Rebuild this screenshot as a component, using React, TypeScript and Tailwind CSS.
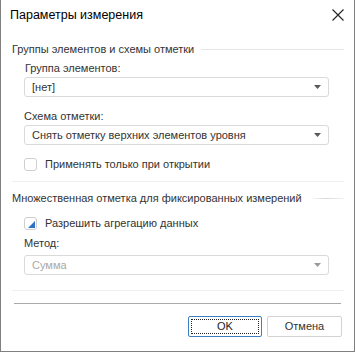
import React from "react";

function Combo({ value, disabled }: { value: string; disabled?: boolean }) {
  return (
    <div className="flex items-center justify-between h-[20px] ml-[12px] mr-[15px] pl-[7px] pr-[7px] border border-[#dadada] rounded-[3px] bg-white">
      <span className={disabled ? "text-[#a8a8a8]" : "text-[#333333]"}>{value}</span>
      <svg width="7" height="4" viewBox="0 0 7 4" className="shrink-0">
        <path d="M0 0H7L3.5 4Z" fill={disabled ? "#9a9a9a" : "#5a5a5a"} />
      </svg>
    </div>
  );
}

function SectionHeader({ title, lineClass }: { title: string; lineClass: string }) {
  return (
    <div className="flex items-center h-[18px]">
      <span className="text-[#333333] whitespace-nowrap">{title}</span>
      <div className={`flex-1 h-px ml-[7px] ${lineClass}`} />
    </div>
  );
}

export default function App() {
  return (
    <div
      className="w-[355px] h-[352px] bg-white border-x border-b border-[#7f7f7f] flex flex-col text-[11px] leading-none"
      style={{ fontFamily: '"Liberation Sans", Arial, sans-serif' }}
    >
      {/* title bar */}
      <div className="flex items-center justify-between h-[30px] pl-[9px] pr-[10px]">
        <span className="text-[12.5px] text-black">Параметры измерения</span>
        <svg width="12" height="12" viewBox="0 0 12 12">
          <path d="M0.5 0.5L11.5 11.5M11.5 0.5L0.5 11.5" stroke="#222" strokeWidth="1.1" />
        </svg>
      </div>

      <div className="flex flex-col pl-[11px] pr-[10px]">
        <div className="mt-[10px]">
          <SectionHeader title="Группы элементов и схемы отметки" lineClass="bg-[#e6e6e6]" />
        </div>

        <div className="flex items-center h-[18px] ml-[13px] mt-px text-[#333333]">Группа элементов:</div>
        <Combo value="[нет]" />

        <div className="flex items-center h-[18px] ml-[12px] mt-[10px] text-[#333333]">Схема отметки:</div>
        <Combo value="Снять отметку верхних элементов уровня" />

        <div className="flex items-center h-[14px] ml-[12px] mt-[12px] gap-[8px]">
          <div className="w-[13px] h-[13px] border border-[#cfcfcf] rounded-[3px] bg-white" />
          <span className="text-[#333333]">Применять только при открытии</span>
        </div>

        <div className="h-px mt-[10px] bg-[#efefef]" />

        <div className="mt-[7px]">
          <SectionHeader
            title="Множественная отметка для фиксированных измерений"
            lineClass="bg-gradient-to-r from-[#ffffff] via-[#d8d8d8] to-[#f2f2f2]"
          />
        </div>

        <div className="flex items-center h-[14px] ml-[12px] mt-[9px] gap-[8px]">
          <div className="relative w-[13px] h-[13px] border border-[#cfcfcf] rounded-[3px] bg-white">
            <svg width="7" height="7" viewBox="0 0 7 7" className="absolute left-[3px] top-[3px]">
              <path d="M7 0V7H0Z" fill="#2a73c4" />
            </svg>
          </div>
          <span className="text-[#333333]">Разрешить агрегацию данных</span>
        </div>

        <div className="flex items-center h-[18px] ml-[12px] mt-[4px] text-[#333333]">Метод:</div>
        <div className="mt-[3px]">
          <Combo value="Сумма" disabled />
        </div>

        <div className="h-px mt-[15px] bg-[#efefef]" />
        <div className="h-px mt-[12px] ml-[2px] mr-[3px] bg-[#a9a9a9]" />

        <div className="flex justify-end gap-[5px] mt-[12px] mr-[2px]">
          <div className="w-[74px] h-[21px] border border-[#3d7fc1] rounded-[2px] p-[2px] bg-white">
            <div className="w-full h-full border border-dotted border-[#222] flex items-center justify-center text-[#222]">
              OK
            </div>
          </div>
          <div className="w-[75px] h-[21px] border border-[#d3d3d3] rounded-[2px] flex items-center justify-center text-[#333333] bg-white">
            Отмена
          </div>
        </div>
      </div>
    </div>
  );
}
